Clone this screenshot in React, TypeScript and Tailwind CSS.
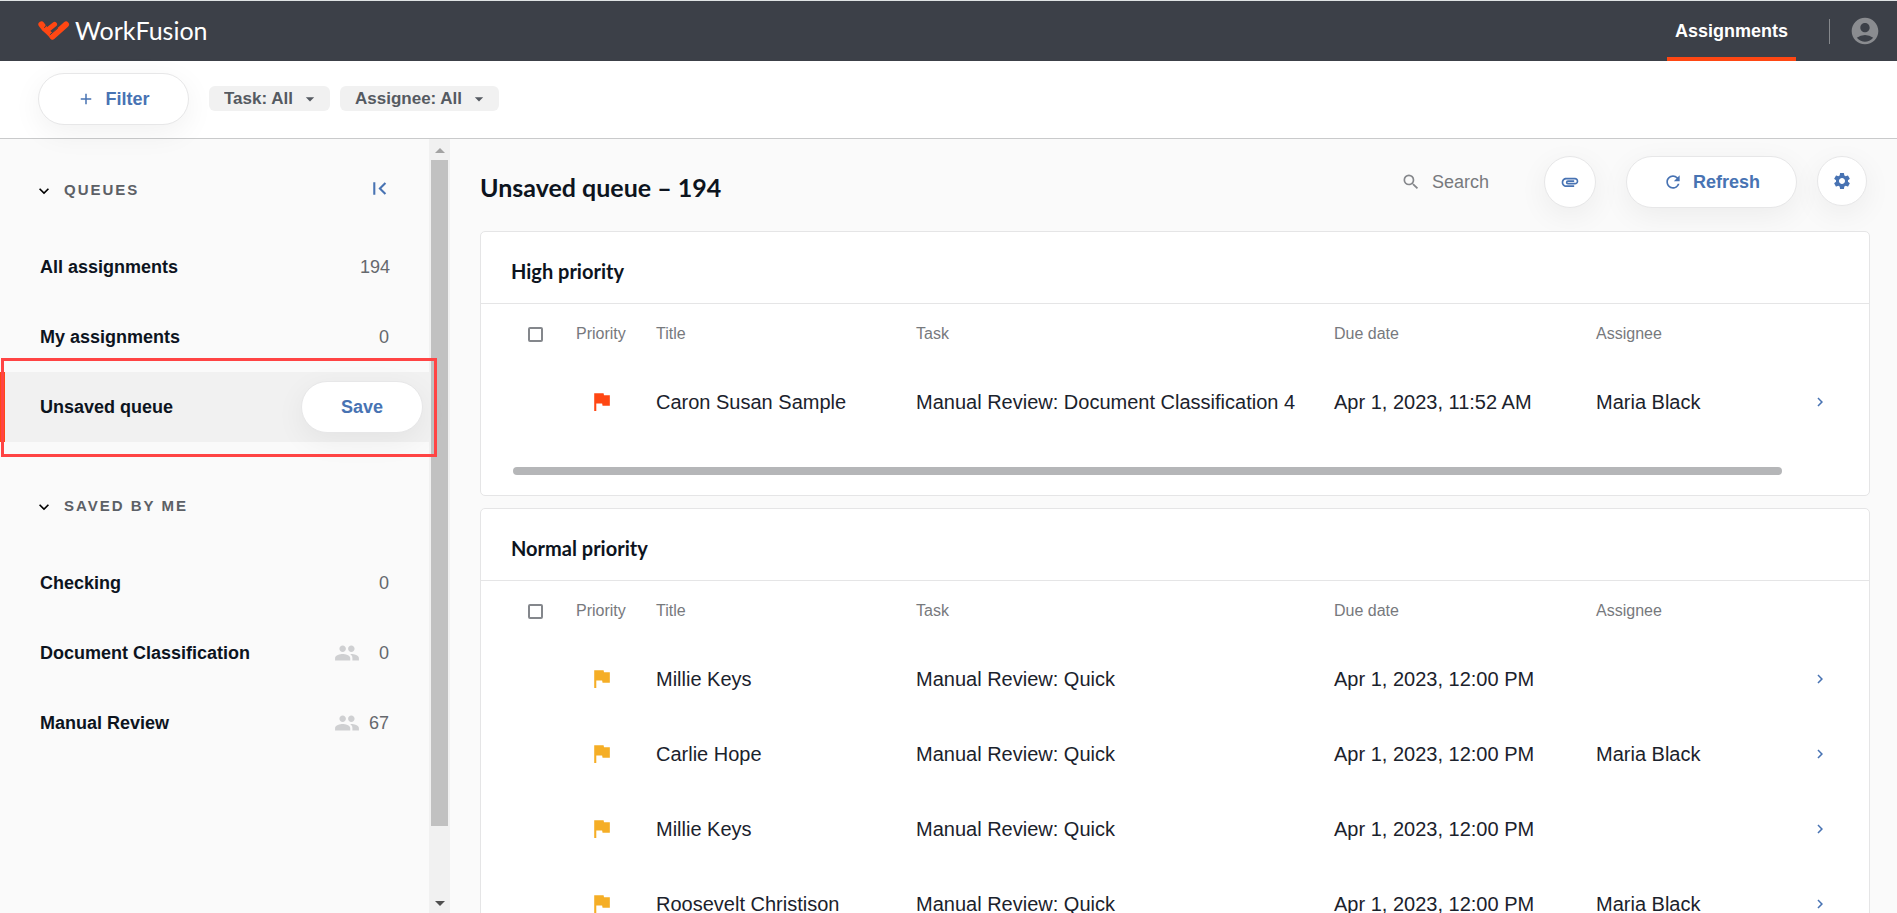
import React from 'react';
import {
  MdAccountCircle,
  MdAdd,
  MdArrowDropDown,
  MdAttachment,
  MdChevronRight,
  MdExpandMore,
  MdFirstPage,
  MdFlag,
  MdPeople,
  MdRefresh,
  MdSearch,
  MdSettings,
} from 'react-icons/md';

interface Queue {
  name: string;
  count: number;
  shared?: boolean;
  unsaved?: boolean;
}

interface Assignment {
  id: number;
  title: string;
  task: string;
  dueDate: string;
  assignee: string;
}

const queues: Queue[] = [
  { name: 'All assignments', count: 194 },
  { name: 'My assignments', count: 0 },
  { name: 'Unsaved queue', count: 194, unsaved: true },
];

const savedQueues: Queue[] = [
  { name: 'Checking', count: 0 },
  { name: 'Document Classification', count: 0, shared: true },
  { name: 'Manual Review', count: 67, shared: true },
];

const highPriority: Assignment[] = [
  {
    id: 1,
    title: 'Caron Susan Sample',
    task: 'Manual Review: Document Classification 4',
    dueDate: 'Apr 1, 2023, 11:52 AM',
    assignee: 'Maria Black',
  },
];

const normalPriority: Assignment[] = [
  { id: 2, title: 'Millie Keys', task: 'Manual Review: Quick', dueDate: 'Apr 1, 2023, 12:00 PM', assignee: '' },
  { id: 3, title: 'Carlie Hope', task: 'Manual Review: Quick', dueDate: 'Apr 1, 2023, 12:00 PM', assignee: 'Maria Black' },
  { id: 4, title: 'Millie Keys', task: 'Manual Review: Quick', dueDate: 'Apr 1, 2023, 12:00 PM', assignee: '' },
  { id: 5, title: 'Roosevelt Christison', task: 'Manual Review: Quick', dueDate: 'Apr 1, 2023, 12:00 PM', assignee: 'Maria Black' },
];

const pill =
  'flex items-center justify-center rounded-full border border-[#e7e7e8] bg-white text-lg font-bold text-[#4873b3] shadow-[0_8px_30px_rgba(0,0,0,0.06)]';

const Logo: React.FC = () => (
  <a href="#" className="flex items-center gap-[5px] text-white">
    <svg width="32" height="20" viewBox="0 0 32 20" fill="none" stroke="#ff4713" strokeLinecap="round" strokeLinejoin="round">
      <path d="M3.4 3.4 L6.5 7.5" strokeWidth="6" />
      <path d="M6.5 7.8 L14.5 15.6" strokeWidth="5" />
      <path d="M16.5 3.4 L8.5 9.8" strokeWidth="5" />
      <path d="M28 3.4 L14.5 15.6" strokeWidth="6" />
      <path d="M19.5 7.4 L12.2 13.6 M9 3.2 L6.6 6.6" stroke="#3c4048" strokeWidth="1" />
    </svg>
    <span className="font-['Lato',sans-serif] text-[25px]">WorkFusion</span>
  </a>
);

const Header: React.FC = () => (
  <header className="flex h-[61px] shrink-0 items-stretch justify-between border-t border-[#dfe3e4] bg-[#3c4048] pr-4 pl-[38px]">
    <Logo />
    <div className="flex items-center">
      <a
        href="#"
        className="flex h-full items-center border-b-4 border-[#ff4713] px-2 pt-1 text-lg font-bold text-white"
      >
        Assignments
      </a>
      <span className="mr-[19px] ml-[33px] h-[25px] w-px bg-[#85888c]" />
      <button type="button" aria-label="Account" className="text-[#8a8c90]">
        <MdAccountCircle size={32} />
      </button>
    </div>
  </header>
);

const FilterSelect: React.FC<{ label: string }> = ({ label }) => (
  <div className="relative flex">
    <select
      aria-label={label}
      className="h-[25px] appearance-none rounded-md bg-[#f1f1f1] pr-9 pl-[15px] text-[17px] leading-[25px] font-bold text-[#555a61]"
    >
      <option>{label}: All</option>
    </select>
    <MdArrowDropDown size={20} className="pointer-events-none absolute top-[3px] right-[10px] text-[#555a61]" />
  </div>
);

const FilterBar: React.FC = () => (
  <div className="flex h-[78px] shrink-0 items-center border-b border-[#c9cacb] bg-white pb-[2px] pl-[38px]">
    <button type="button" className={`${pill} h-[52px] w-[151px] gap-[10px]`}>
      <MdAdd size={18} />
      Filter
    </button>
    <div className="ml-5 flex gap-[10px]">
      <FilterSelect label="Task" />
      <FilterSelect label="Assignee" />
    </div>
  </div>
);

const QueueRow: React.FC<{ queue: Queue }> = ({ queue }) => {
  if (queue.unsaved) {
    return (
      <li className="relative flex h-[70px] items-center justify-between border-l-[5px] border-[#ff4713] bg-[#f1f1f1] pr-[6px] pl-[35px]">
        <a href="#">{queue.name}</a>
        <button type="button" className={`${pill} h-[52px] w-[122px]`}>
          Save
        </button>
        <span className="pointer-events-none absolute -top-[14px] -right-[8px] -bottom-[15px] -left-1 z-10 border-[3px] border-[#ff4444]" />
      </li>
    );
  }

  return (
    <li className="flex h-[70px] items-center pr-10 pl-10">
      <a href="#" className="flex-1">
        {queue.name}
      </a>
      {queue.shared && <MdPeople size={26} className="text-[#cfd0d2]" />}
      <span className="w-[29px] text-right font-normal text-[#65686d]">{queue.count}</span>
    </li>
  );
};

const QueueSection: React.FC<{ title: string; items: Queue[]; collapsible?: boolean }> = ({
  title,
  items,
  collapsible,
}) => (
  <section>
    <div className="flex items-center justify-between pt-[41px] pr-[37px] pb-[31px] pl-[34px]">
      <button type="button" className="flex h-[21px] items-center gap-[10px] text-[15px] font-bold tracking-[2px] text-[#5c6066]">
        <MdExpandMore size={20} className="text-black" />
        {title}
      </button>
      {collapsible && (
        <button type="button" aria-label="Collapse" className="-mt-2 -mb-1 text-[#4873b3]">
          <MdFirstPage size={25} />
        </button>
      )}
    </div>
    <ul className="text-lg font-bold text-[#0d141e]">
      {items.map((queue) => (
        <QueueRow key={queue.name} queue={queue} />
      ))}
    </ul>
  </section>
);

const Sidebar: React.FC = () => (
  <aside className="flex w-[450px] shrink-0">
    <nav className="flex flex-1 flex-col gap-[13px]">
      <QueueSection title="QUEUES" items={queues} collapsible />
      <QueueSection title="SAVED BY ME" items={savedQueues} />
    </nav>
    <div className="flex w-[21px] flex-col items-center bg-[#f1f1f1]">
      <span className="mt-[9px] mb-[7px] border-x-[5px] border-b-[5px] border-x-transparent border-b-[#a3a3a3]" />
      <span className="h-[86%] w-[17px] bg-[#c1c1c1]" />
      <span className="mt-auto mb-[7px] border-x-[5px] border-t-[5px] border-x-transparent border-t-[#505050]" />
    </div>
  </aside>
);

const AssignmentCard: React.FC<{ title: string; items: Assignment[]; flag: string; scrollable?: boolean }> = ({
  title,
  items,
  flag,
  scrollable,
}) => (
  <section className="shrink-0 rounded-[5px] border border-[#e5e5e6] bg-white">
    <h2 className="flex h-[72px] items-center border-b border-[#e5e5e6] px-[30px] pt-[6px] font-['Lato',sans-serif] text-xl font-bold text-[#0d141e]">
      {title}
    </h2>
    <table className="w-full table-fixed text-left text-xl">
      <colgroup>
        <col className="w-[95px]" />
        <col className="w-[80px]" />
        <col className="w-[260px]" />
        <col className="w-[418px]" />
        <col className="w-[262px]" />
        <col />
        <col className="w-[98px]" />
      </colgroup>
      <thead>
        <tr className="h-[60px] text-base text-[#77797d]">
          <th className="pl-[47px]">
            <input
              type="checkbox"
              aria-label={`Select all in ${title}`}
              className="block size-[15px] appearance-none rounded-xs border-2 border-[#84878c]"
            />
          </th>
          <th className="font-normal">Priority</th>
          <th className="font-normal">Title</th>
          <th className="font-normal">Task</th>
          <th className="font-normal">Due date</th>
          <th className="font-normal">Assignee</th>
          <th />
        </tr>
      </thead>
      <tbody>
        {items.map((item) => (
          <tr key={item.id} className="h-[75px]">
            <td />
            <td className="pl-[13px]">
              <MdFlag size={25} className={flag} />
            </td>
            <td>{item.title}</td>
            <td>{item.task}</td>
            <td>{item.dueDate}</td>
            <td>{item.assignee}</td>
            <td>
              <button type="button" aria-label={`Open ${item.title}`} className="mx-auto block text-[#4873b3]">
                <MdChevronRight size={18} />
              </button>
            </td>
          </tr>
        ))}
      </tbody>
    </table>
    {scrollable && (
      <div className="pr-[34px] pl-8 pt-[28px] pb-5">
        <div className="h-2 w-[96%] rounded-full bg-[#b5b6b8]" />
      </div>
    )}
  </section>
);

const App: React.FC = () => {
  return (
    <div className="flex h-screen flex-col overflow-hidden bg-[#fafafa] font-['Liberation_Sans',Arial,sans-serif] text-[#1b222c]">
      <Header />
      <FilterBar />
      <div className="flex min-h-0 flex-1">
        <Sidebar />
        <main className="flex min-w-0 flex-1 flex-col gap-3 overflow-hidden pr-[27px] pl-[30px]">
          <div className="flex h-20 shrink-0 items-start justify-between pt-[17px] pr-[3px]">
            <h1 className="pt-[13px] font-['Lato',sans-serif] text-[25px] font-bold text-[#0d141e]">
              Unsaved queue – 194
            </h1>
            <div className="flex items-start">
              <label className="flex h-[52px] items-center gap-[11px] text-[#85878b]">
                <MdSearch size={20} />
                <input
                  type="search"
                  placeholder="Search"
                  aria-label="Search"
                  className="w-[112px] bg-transparent text-lg placeholder:text-[#77797d]"
                />
              </label>
              <button type="button" aria-label="Attachments" className={`${pill} size-[52px]`}>
                <MdAttachment size={20} />
              </button>
              <button type="button" className={`${pill} ml-[30px] h-[52px] w-[171px] gap-[10px]`}>
                <MdRefresh size={20} />
                Refresh
              </button>
              <button type="button" aria-label="Settings" className={`${pill} ml-5 size-[50px]`}>
                <MdSettings size={20} />
              </button>
            </div>
          </div>
          <AssignmentCard title="High priority" items={highPriority} flag="text-[#ff4713]" scrollable />
          <AssignmentCard title="Normal priority" items={normalPriority} flag="text-[#f5ae26]" />
        </main>
      </div>
    </div>
  );
};

export default App;
